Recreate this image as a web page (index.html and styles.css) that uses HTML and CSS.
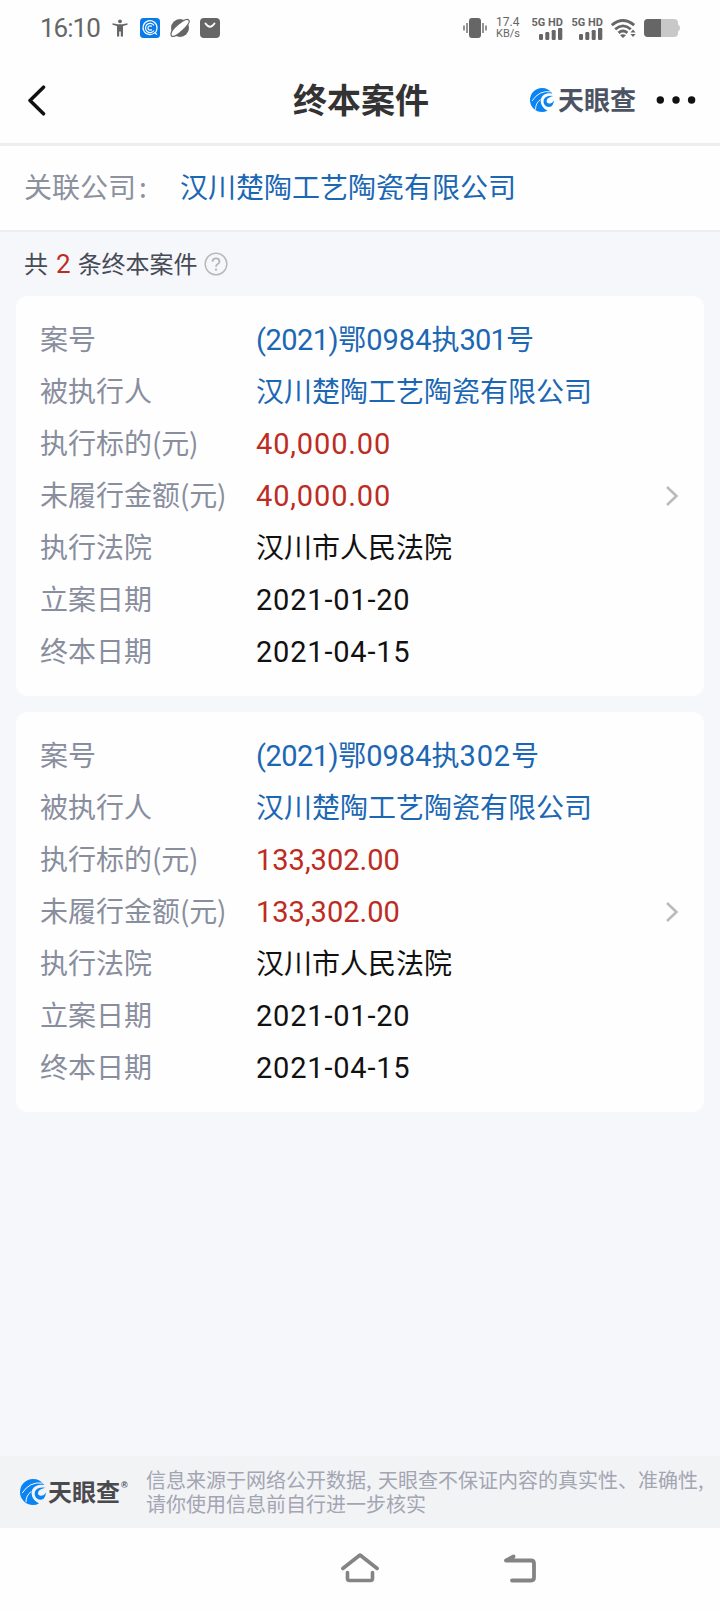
FILE: index.html
```html
<!DOCTYPE html>
<html lang="zh-CN">
<head>
<meta charset="utf-8">
<title>终本案件</title>
<link rel="stylesheet" href="styles.css">
</head>
<body>
<svg class="defs" width="0" height="0" aria-hidden="true">
  <symbol id="swirl" viewBox="0 0 24 24">
    <path d="M12 0Q18.500 0 22.300 5.500Q14.500 4.500 11.500 9.500Q9.500 14 12.500 18.500Q14 21 17.500 22.500Q15 24 12 24A12 12 0 0 1 12 0Z" fill="#0b84f3"/>
    <path d="M23.500 8Q16 7 13.800 11.500Q12.800 16 16 18.300Q19 20 22 18Q23.800 15.500 24 12.500Q22 16 19 15.500Q15.500 14.500 17 11.500Q18.500 9 23.500 8Z" fill="#0b84f3"/>
    <path d="M21 3.800Q9 2 2 13M10.500 11.500Q5.500 15 5.500 21.500" fill="none" stroke="#fff" stroke-width=".9"/>
  </symbol>
</svg>

<header class="status">
  <div class="status-left">
    <span class="clock">16:10</span>
    <svg class="i-person" width="16" height="18" viewBox="0 0 16 18"><circle cx="8" cy="2.300" r="1.900"/><path d="M.5 4.300 5.500 5.200h5l5-.9v1.500L11 7v10.500H8.800v-5H7.200v5H5V7L.5 5.800Z"/></svg>
    <svg class="i-app" width="20" height="20" viewBox="0 0 20 20"><rect width="20" height="20" rx="3.500" fill="#087be8"/><g fill="none" stroke="#fff" stroke-width="1.200"><path d="M15.500 14A7 7 0 1 1 17 10q0 3-2 5l2 1.500"/><path d="M14 7.500A4.600 4.600 0 1 0 14 12.500"/><path d="M11.800 8.500a2.200 2.200 0 1 0 0 3"/></g></svg>
    <svg class="i-planet" width="20" height="20" viewBox="0 0 20 20"><circle cx="10" cy="10" r="9"/><path d="M1.500 18Q-1 14 8 6.500T19 2.500Q20.500 5 12.500 12.500T1.500 18Z" fill="#fff" stroke="#666" stroke-width="1.200"/></svg>
    <svg class="i-bag" width="20" height="20" viewBox="0 0 20 20"><rect width="20" height="20" rx="4"/><path d="M5.500 5.500q4.500 6.500 9 0" fill="none" stroke="#fff" stroke-width="1.900" stroke-linecap="round"/></svg>
  </div>
  <div class="status-right">
    <svg width="24" height="20" viewBox="0 0 24 20"><rect x="6" y="0" width="12" height="20" rx="3"/><path d="M1 7.500v5M4 5v10M20 5v10M23 7.500v5" stroke="#666" stroke-width="1.400"/></svg>
    <div class="speed"><span>17.4</span><span>KB/s</span></div>
    <div class="signal s1"><span>5G HD</span><svg width="24" height="12" viewBox="0 0 24 12"><rect x="0" y="6" width="4" height="6" rx="1.200"/><rect x="6.300" y="4" width="4" height="8" rx="1.200"/><rect x="12.700" y="2" width="4" height="10" rx="1.200"/><rect x="19" y="0" width="4.300" height="12" rx="1.200"/></svg></div>
    <div class="signal s2"><span>5G HD</span><svg width="24" height="12" viewBox="0 0 24 12"><rect x="0" y="6" width="4" height="6" rx="1.200"/><rect x="6.300" y="4" width="4" height="8" rx="1.200"/><rect x="12.700" y="2" width="4" height="10" rx="1.200"/><rect x="19" y="0" width="4.300" height="12" rx="1.200"/></svg></div>
    <svg class="i-wifi" width="25" height="19" viewBox="0 0 25 19"><g fill="none" stroke="#666" stroke-width="2.800"><path d="M.8 6.200q11-9.400 22.400 0"/><path d="M4.200 10.200q7.800-6.600 15.600 0"/><path d="M7.600 13.800q4.400-3.600 8.800 0"/></g><path d="M9 16.200q3-2 6 0L12 19Z"/><path d="m22 10.500 2.600 3h-5.200ZM22 18l2.600-3h-5.200Z"/></svg>
    <svg class="i-batt" width="36" height="18" viewBox="0 0 36 18"><path d="M4 0h26q4 0 4 4v1.500q2 .5 2 3.500t-2 3.500V14q0 4-4 4H4q-4 0-4-4V4q0-4 4-4Z" fill="#c8c8c8"/><path d="M4 0h13v18H4q-4 0-4-4V4q0-4 4-4Z"/></svg>
  </div>
</header>

<nav class="titlebar">
  <svg class="back" width="18" height="31" viewBox="0 0 18 31"><path d="M15.500 2.200 2 15.500 15.500 28.800" fill="none" stroke="#111" stroke-width="3.500" stroke-linecap="round" stroke-linejoin="round"/></svg>
  <h1 class="title">终本案件</h1>
  <div class="brand"><svg width="24" height="24"><use href="#swirl"/></svg><span>天眼查</span></div>
  <svg class="more" width="40" height="8" viewBox="0 0 40 8"><circle cx="4.300" cy="4" r="3.700"/><circle cx="20" cy="4" r="3.700"/><circle cx="35.600" cy="4" r="3.700"/></svg>
</nav>

<section class="company"><span class="company-label">关联公司<span class="colon">:</span></span><a class="company-name">汉川楚陶工艺陶瓷有限公司</a></section>

<main class="content">
  <div class="summary"><span>共</span><b class="count">2</b><span>条终本案件</span><svg width="24" height="24" viewBox="0 0 24 24"><circle cx="12" cy="12" r="10.800" fill="none" stroke="#bbb" stroke-width="1.500"/><path d="M8.500 9.700Q8.700 6.400 12 6.400T15.500 9.500Q15.500 11 13.500 12.200Q12 13.200 12 14.700" fill="none" stroke="#b5b5b8" stroke-width="1.800"/><circle cx="12" cy="17.600" r="1.200" fill="#b5b5b8"/></svg></div>

  <article class="card">
    <dl class="fields">
      <dt>案号</dt><dd class="link"><span class="paren">(2021)</span>鄂<span class="num">0984</span>执<span class="tail">301</span>号</dd>
      <dt>被执行人</dt><dd class="link">汉川楚陶工艺陶瓷有限公司</dd>
      <dt>执行标的<span class="unit">(元)</span></dt><dd class="amount">40,000.00</dd>
      <dt>未履行金额<span class="unit">(元)</span></dt><dd class="amount">40,000.00</dd>
      <dt>执行法院</dt><dd>汉川市人民法院</dd>
      <dt>立案日期</dt><dd class="date">2021-01-20</dd>
      <dt>终本日期</dt><dd class="date">2021-04-15</dd>
    </dl>
    <svg class="chevron" width="14" height="22" viewBox="0 0 14 22"><path d="m2 2 9.500 9L2 20" fill="none" stroke="#b9babf" stroke-width="2.500"/></svg>
  </article>

  <article class="card">
    <dl class="fields">
      <dt>案号</dt><dd class="link"><span class="paren">(2021)</span>鄂<span class="num">0984</span>执<span class="tail wide">302</span>号</dd>
      <dt>被执行人</dt><dd class="link">汉川楚陶工艺陶瓷有限公司</dd>
      <dt>执行标的<span class="unit">(元)</span></dt><dd class="amount large">133,302.00</dd>
      <dt>未履行金额<span class="unit">(元)</span></dt><dd class="amount large">133,302.00</dd>
      <dt>执行法院</dt><dd>汉川市人民法院</dd>
      <dt>立案日期</dt><dd class="date">2021-01-20</dd>
      <dt>终本日期</dt><dd class="date">2021-04-15</dd>
    </dl>
    <svg class="chevron" width="14" height="22" viewBox="0 0 14 22"><path d="m2 2 9.500 9L2 20" fill="none" stroke="#b9babf" stroke-width="2.500"/></svg>
  </article>
</main>

<footer class="notice">
  <div class="brand dark"><svg width="26" height="26"><use href="#swirl"/></svg><span>天眼查</span><sup>®</sup></div>
  <p class="notice-text">信息来源于网络公开数据, 天眼查不保证内容的真实性、准确性,<br>请你使用信息前自行进一步核实</p>
</footer>

<div class="sysnav">
  <svg class="home" width="40" height="32" viewBox="0 0 40 32"><g fill="none" stroke="#858383" stroke-width="3.600" stroke-linecap="round" stroke-linejoin="round"><path d="M2.800 16.500 20 3 37.200 16.500"/><path d="M7.500 20.500v6q0 2 2 2h21q2 0 2-2v-6"/></g></svg>
  <svg class="return" width="34" height="30" viewBox="0 0 34 30"><g fill="none" stroke="#858383" stroke-width="3.800" stroke-linecap="round" stroke-linejoin="round"><path d="M10.500 2.500 3 6.500H28q3 0 3 3v14q0 3-3 3H9"/></g></svg>
</div>
</body>
</html>
```

FILE: styles.css
```css
* { box-sizing: border-box; }
body {
  margin: 0;
  width: 720px;
  height: 1612px;
  display: flex;
  flex-direction: column;
  overflow: hidden;
  background: #fefefe;
  color: #111;
  font-family: "Noto Sans CJK SC", "Noto Sans", sans-serif;
  font-weight: 400;
}
svg { display: block; flex: none; }
.defs { position: absolute; }

/* Status bar */
.status { height: 56px; display: flex; justify-content: space-between; padding: 0 40px 0 40px; fill: #666; color: #666; font-family: Roboto, sans-serif; }
.status-left, .status-right { display: flex; align-items: center; }
.clock { width: 60px; margin-right: 12px; font-size: 26px; letter-spacing: -1px; line-height: 56px; white-space: nowrap; }
.i-app { margin-left: 12px; }
.i-planet, .i-bag { margin-left: 10px; }
.speed { display: flex; flex-direction: column; width: 24px; margin-left: 9px; font-size: 11px; line-height: 11px; white-space: nowrap; }
.speed span:first-child { font-size: 12px; }
.signal { display: flex; flex-direction: column; align-items: flex-end; width: 33px; font-size: 11px; line-height: 11px; font-weight: 700; white-space: nowrap; }
.s1 { margin-left: 10px; }
.s2 { margin-left: 7px; }
.i-wifi { margin-left: 8px; }
.i-batt { margin-left: 8px; }

/* Title bar */
.titlebar { height: 90px; display: grid; grid-template-columns: 265px 188px 147px 1fr; align-items: center; padding: 0 0 0 28px; border-bottom: 3px solid #eee; }
.back { margin-top: 1px; }
.title { margin: 0 0 2px; font-size: 34px; line-height: 50px; font-weight: 700; color: #333; }
.brand { display: flex; align-items: center; color: #4c5364; white-space: nowrap; }
.titlebar .brand { margin-left: 49px; }
.titlebar .brand span { margin: -2px 0 0 4px; font-size: 26px; font-weight: 700; line-height: 30px; }
.more { margin-left: 28px; fill: #111; }

/* Related company */
.company { height: 86px; display: flex; padding-left: 24px; border-bottom: 2px solid #eeeef3; font-size: 28px; line-height: 80px; }
.company-label { width: 156px; color: #8c919e; }
.colon { margin-left: 3px; }
.company-name { color: #1b67b4; }

/* Case list */
.content { height: 1224px; background: #f6f7fb; padding: 0 16px; }
.summary { height: 64px; display: flex; align-items: center; padding-left: 8px; font-size: 24px; line-height: 62px; color: #464b56; }
.summary > span { margin-top: -2px; }
.count { margin: 0 7px 0 8px; font: 400 26px/64px Roboto, sans-serif; color: #bd2c22; }
.summary svg { margin: 0 0 0 6px; }
.card { height: 400px; margin-bottom: 16px; padding: 18px 25px 18px 24px; border-radius: 12px; background: #fefefe; display: flex; justify-content: space-between; align-items: center; }
.fields { margin: 0; display: grid; grid-template-columns: 216px auto; grid-auto-rows: 52px; font-size: 28px; line-height: 49px; white-space: nowrap; }
.fields dt { color: #898e9e; }
.fields dd { margin: 0; }
.unit { letter-spacing: -.3px; }
.fields .link { color: #1b67b4; }
.fields .amount { color: #bd2c22; font-family: Roboto, sans-serif; font-size: 29px; line-height: 53px; letter-spacing: .85px; }
.fields .large { letter-spacing: 0; }
.fields .date { font-family: Roboto, sans-serif; font-size: 29px; line-height: 52px; letter-spacing: .8px; }
.paren, .num, .tail { font-family: Roboto, sans-serif; font-size: 29px; }
.paren { letter-spacing: -.5px; }
.tail { letter-spacing: -.8px; }
.wide { letter-spacing: .9px; }

/* Source notice */
.notice { height: 72px; display: flex; align-items: center; padding-left: 20px; background: #f2f3f5; }
.brand.dark { width: 126px; color: #4a4a4e; }
.dark span { margin: -3px 0 0 2px; font-size: 24px; font-weight: 700; line-height: 30px; }
.dark sup { align-self: flex-start; font: 700 9px/12px "Liberation Sans", sans-serif; margin-left: 1px; }
.notice-text { margin: 0; font-size: 20px; line-height: 24px; color: #a3a5b3; white-space: nowrap; word-spacing: 2px; }

/* System navigation */
.sysnav { height: 84px; display: flex; padding: 24px 0 0 340px; }
.return { margin: 2px 0 0 123px; }
```
